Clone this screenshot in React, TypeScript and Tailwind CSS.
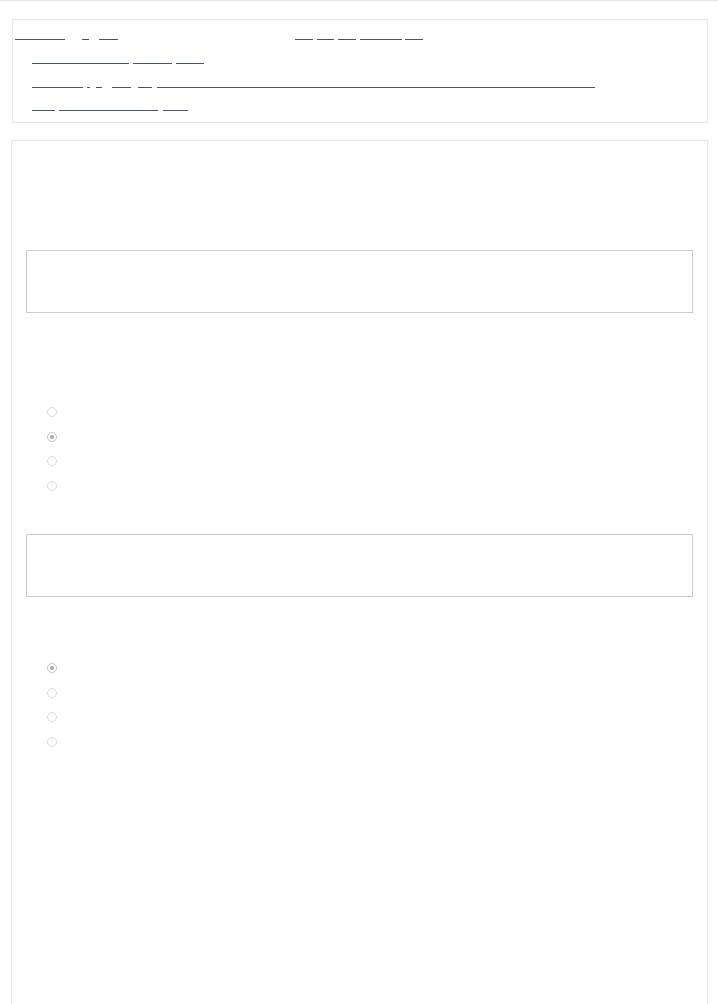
import React from "react";

type Seg = [number, number, string];

const rows: { start: number; segs: Seg[] }[] = [
  {
    start: 13,
    segs: [
      [15, 65, "Contents"],
      [82, 89, "a"],
      [99, 118, "Top"],
      [295, 313, "Unit"],
      [317, 334, "Set"],
      [338, 356, "Hint"],
      [360, 402, "Answers"],
      [405, 423, "End"],
    ],
  },
  {
    start: 13,
    segs: [
      [32, 129, "Introduction to"],
      [133, 172, "module"],
      [176, 204, "text"],
    ],
  },
  {
    start: 13,
    segs: [
      [32, 83, "Question"],
      [87, 90, "i"],
      [96, 102, "a"],
      [112, 131, "one"],
      [138, 152, "is"],
      [157, 595, "Read the passage and choose the best answer for each question below"],
    ],
  },
  {
    start: 13,
    segs: [
      [32, 55, "Part"],
      [59, 158, "Summary and review"],
      [163, 188, "quiz"],
    ],
  },
];

function LinkRow({ start, segs }: { start: number; segs: Seg[] }) {
  let cursor = start;
  return (
    <div className="flex h-[20px] items-end">
      {segs.map(([s, e, t], i) => {
        const ml = s - cursor;
        cursor = e;
        return (
          <a
            key={i}
            href="#"
            className="block h-[20px] whitespace-nowrap border-b border-[#465468] text-[10px] leading-[19px] text-white"
            style={{ width: e - s, marginLeft: ml }}
          >
            {t}
          </a>
        );
      })}
    </div>
  );
}

function Radio({ checked }: { checked?: boolean }) {
  return (
    <div className="flex h-[24.5px] items-center pl-[21px]">
      <span
        className={
          checked
            ? "flex h-[10px] w-[10px] items-center justify-center rounded-full border border-[#c4c4c4] bg-white"
            : "flex h-[10px] w-[10px] items-center justify-center rounded-full border border-[#dadada] bg-white"
        }
      >
        {checked ? <span className="h-[4px] w-[4px] rounded-full bg-[#a9a9a9]" /> : null}
      </span>
      <span className="ml-[8px] text-[13px] leading-[16px] text-white">Option</span>
    </div>
  );
}

export default function App() {
  return (
    <div
      className="min-h-[1004px] overflow-hidden border-t border-[#e2e2e2] bg-white"
      style={{ fontFamily: '"Liberation Sans", Arial, sans-serif' }}
    >
      <div className="ml-[12px] mr-[10px] mt-[18px] flex flex-col gap-[4px] border border-[#e8e8e8] pb-[11px]">
        <LinkRow {...rows[0]} />
        <LinkRow {...rows[1]} />
        <LinkRow {...rows[2]} />
        <div className="-mt-[1px]">
          <LinkRow {...rows[3]} />
        </div>
      </div>

      <div className="ml-[11px] mr-[10px] mt-[17px] h-[900px] border border-[#e8e8e8] px-[14px]">
        <div className="h-[109px] text-[13px] leading-[16px] text-white">Question 1</div>
        <div className="h-[63px] border border-[#cbcbcb]" />
        <div className="h-[87px] pt-[40px] text-[13px] leading-[16px] text-white">Choose one answer.</div>
        <Radio />
        <Radio checked />
        <Radio />
        <Radio />
        <div className="h-[36px]" />
        <div className="h-[63px] border border-[#cbcbcb]" />
        <div className="h-[59px] pt-[20px] text-[13px] leading-[16px] text-white">Choose one answer.</div>
        <Radio checked />
        <Radio />
        <Radio />
        <Radio />
      </div>
    </div>
  );
}
